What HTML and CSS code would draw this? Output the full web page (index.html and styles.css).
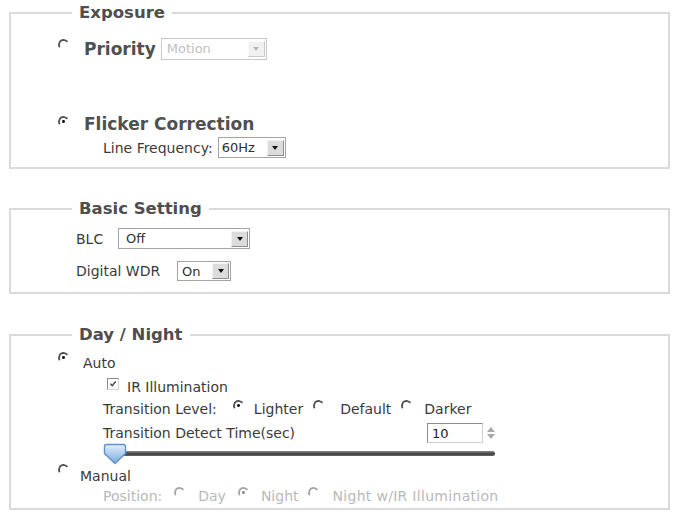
FILE: index.html
```html
<!DOCTYPE html>
<html lang="en">
<head>
<meta charset="utf-8">
<title>Camera Settings</title>
<link rel="stylesheet" href="styles.css">
</head>
<body>
<div class="page">

  <fieldset class="group group-exposure">
    <legend class="group-title">Exposure</legend>

    <div class="row row-priority">
      <span class="radio radio-big"></span>
      <span class="opt-title">Priority</span>
      <div class="select select-disabled select-motion">
        <span class="select-value">Motion</span>
        <span class="select-btn"><i class="tri"></i></span>
      </div>
    </div>

    <div class="row row-flicker">
      <span class="radio radio-big checked"></span>
      <span class="opt-title">Flicker Correction</span>
    </div>

    <div class="row row-linefreq indent">
      <span class="label">Line Frequency:</span>
      <div class="select select-hz">
        <span class="select-value">60Hz</span>
        <span class="select-btn"><i class="tri"></i></span>
      </div>
    </div>
  </fieldset>

  <fieldset class="group group-basic">
    <legend class="group-title">Basic Setting</legend>

    <div class="row row-blc">
      <span class="label label-blc">BLC</span>
      <div class="select select-blc">
        <span class="select-value">Off</span>
        <span class="select-btn"><i class="tri"></i></span>
      </div>
    </div>

    <div class="row row-wdr">
      <span class="label label-wdr">Digital WDR</span>
      <div class="select select-wdr">
        <span class="select-value">On</span>
        <span class="select-btn"><i class="tri"></i></span>
      </div>
    </div>
  </fieldset>

  <fieldset class="group group-daynight">
    <legend class="group-title">Day / Night</legend>

    <div class="row row-auto">
      <span class="radio checked"></span>
      <span class="label opt-auto">Auto</span>
    </div>

    <div class="row row-ir">
      <span class="checkbox">
        <svg viewBox="0 0 12 12" width="12" height="12"><path d="M3 5.5 L5 8.2 L9.2 3" fill="none" stroke="#333" stroke-width="1.5"/></svg>
      </span>
      <span class="label">IR Illumination</span>
    </div>

    <div class="row row-level indent">
      <span class="label">Transition Level:</span>
      <span class="radio checked gap-l16"></span>
      <span class="label gap-l10">Lighter</span>
      <span class="radio gap-l10"></span>
      <span class="label gap-l16">Default</span>
      <span class="radio gap-l10"></span>
      <span class="label gap-l12">Darker</span>
    </div>

    <div class="row row-time indent">
      <span class="label label-time">Transition Detect Time(sec)</span>
      <div class="spin">
        <span class="spin-value">10</span>
      </div>
      <span class="spin-arrows">
        <i class="spin-up"></i>
        <i class="spin-down"></i>
      </span>
    </div>

    <div class="row row-slider indent">
      <div class="slider">
        <div class="slider-track"></div>
        <svg class="slider-thumb" viewBox="0 0 26 24" width="26" height="24">
          <defs>
            <linearGradient id="thumbFill" x1="0" y1="0" x2="0" y2="1">
              <stop offset="0" stop-color="#e4f0fb"/>
              <stop offset="0.55" stop-color="#a9c9ec"/>
              <stop offset="1" stop-color="#7ea9da"/>
            </linearGradient>
          </defs>
          <path d="M4.5 2.5 H21.5 Q23.5 2.5 23.5 4.5 V11.5 L13 21.5 L2.5 11.5 V4.5 Q2.5 2.5 4.5 2.5 Z" fill="url(#thumbFill)" stroke="#5f8fc9" stroke-width="1.4" stroke-linejoin="round"/>
        </svg>
      </div>
    </div>

    <div class="row row-manual">
      <span class="radio"></span>
      <span class="label opt-manual">Manual</span>
    </div>

    <div class="row row-position indent is-disabled">
      <span class="label">Position:</span>
      <span class="radio gap-l12"></span>
      <span class="label gap-l13">Day</span>
      <span class="radio checked gap-l12"></span>
      <span class="label gap-l12">Night</span>
      <span class="radio gap-l9"></span>
      <span class="label gap-l14 wide">Night w/IR Illumination</span>
    </div>
  </fieldset>

</div>
</body>
</html>
```

FILE: styles.css
```css
html, body {
  margin: 0;
  padding: 0;
  background: #ffffff;
}

body {
  font-family: "DejaVu Sans", Verdana, sans-serif;
  font-size: 14px;
  color: #3a3a3a;
}

.page {
  padding: 4px 3px 0 9px;
}

/* ---------- group boxes ---------- */
.group {
  margin: 0;
  padding: 0;
  border: 2px solid #dadada;
  min-width: 0;
}

.group-title {
  margin-left: 61px;
  padding: 0 7px;
  font-size: 16.5px;
  font-weight: bold;
  line-height: 18px;
  color: #4e4e4e;
}

.group-exposure { padding-bottom: 9px; }
.group-basic { margin-top: 31px; padding-bottom: 11px; }
.group-daynight { margin-top: 32px; padding-bottom: 3px; }

/* ---------- rows ---------- */
.row {
  display: flex;
  align-items: center;
  white-space: nowrap;
}

.indent { padding-left: 92px; }

.label { line-height: 18px; }

.opt-title {
  font-size: 17px;
  font-weight: bold;
  color: #505050;
  line-height: 22px;
}

.row-priority { margin-top: 15px; height: 23px; padding-left: 47px; }
.row-priority .opt-title { margin-left: 15px; margin-right: 5px; }

.row-flicker { margin-top: 53px; height: 22px; padding-left: 47px; }
.row-flicker .opt-title { margin-left: 15px; }

.row-linefreq { margin-top: 2px; height: 21px; }
.row-linefreq .label { margin-right: 5px; }

.row-blc { margin-top: 10px; height: 21px; padding-left: 65px; }
.row-wdr { margin-top: 12px; height: 20px; padding-left: 65px; }
.label-blc { width: 42px; }
.label-wdr { width: 101px; }

.row-auto { margin-top: 10px; height: 18px; padding-left: 47px; }
.opt-auto { margin-left: 14px; }

.row-ir { margin-top: 6px; height: 18px; padding-left: 96px; }
.row-ir .label { margin-left: 8px; }

.row-level { margin-top: 4px; height: 18px; }

.row-time { margin-top: 4px; height: 22px; }
.label-time { width: 324px; }

.row-slider { height: 22px; }

.row-manual { margin-top: 1px; height: 18px; padding-left: 47px; }
.opt-manual { margin-left: 11px; }

.row-position { margin-top: 2px; height: 18px; }

.gap-l9 { margin-left: 9px; }
.gap-l10 { margin-left: 10px; }
.gap-l12 { margin-left: 12px; }
.gap-l13 { margin-left: 13px; }
.gap-l14 { margin-left: 14px; }
.gap-l16 { margin-left: 16px; }

.is-disabled { color: #b9b9b9; }
.is-disabled .wide { letter-spacing: 0.3px; }

/* ---------- classic radio: dark arc on the upper-left ---------- */
.radio {
  position: relative;
  flex: none;
  width: 7px;
  height: 7px;
  border-radius: 50%;
  border: 2px solid;
  border-color: #555 transparent transparent #555;
  transform: rotate(10deg);
  align-self: flex-start;
  margin-top: 0;
}
.radio-big { margin-top: 2px; }
.row-flicker .radio { margin-top: 3px; }
.row-auto .radio { margin-top: -2px; }
.row-manual .radio { margin-top: -3px; }
.row-level .radio,
.row-position .radio { margin-top: 0; }

.radio.checked::after {
  content: "";
  position: absolute;
  left: 2px;
  top: 2px;
  width: 3px;
  height: 3px;
  border-radius: 50%;
  background: #111;
}

.is-disabled .radio {
  border-color: #a6a6a6 transparent transparent #a6a6a6;
}
.is-disabled .radio.checked::after { background: #8a8a8a; }

/* ---------- checkbox ---------- */
.checkbox {
  flex: none;
  width: 10px;
  height: 10px;
  border: 1px solid;
  border-color: #8a8a8a #d6d6d6 #d6d6d6 #8a8a8a;
  display: flex;
  align-items: center;
  justify-content: center;
  align-self: flex-start;
  margin-top: 0;
}
.checkbox svg { width: 10px; height: 10px; }

/* ---------- select boxes ---------- */
.select {
  flex: none;
  display: flex;
  align-items: center;
  justify-content: space-between;
  box-sizing: border-box;
  border: 1px solid #a3a3a3;
  background: #fff;
  padding: 0 1px 0 5px;
  font-size: 13px;
  color: #2e2e2e;
}
.select-motion { width: 106px; height: 22px; }
.select-hz { width: 68px; height: 21px; padding-left: 3px; }
.select-blc { width: 132px; height: 21px; padding-left: 7px; }
.select-wdr { width: 54px; height: 20px; padding-left: 4px; }

.select-btn {
  box-sizing: border-box;
  width: 17px;
  height: 16px;
  background: #dcdcdc;
  border: 1px solid;
  border-color: #f2f2f2 #8e8e8e #8e8e8e #f2f2f2;
  display: flex;
  align-items: center;
  justify-content: center;
}
.tri {
  width: 0;
  height: 0;
  border-left: 3.5px solid transparent;
  border-right: 3.5px solid transparent;
  border-top: 4px solid #111;
}

.select-disabled { border-color: #c9c9c9; color: #c0c0c0; }
.select-disabled .select-btn {
  background: #f1f1f1;
  border-color: #fafafa #c8c8c8 #c8c8c8 #fafafa;
}
.select-disabled .tri { border-top-color: #b5b5b5; }

/* ---------- spin box ---------- */
.spin {
  box-sizing: border-box;
  width: 56px;
  height: 20px;
  border: 1px solid;
  border-color: #8c8c8c #d0d0d0 #d0d0d0 #8c8c8c;
  padding-left: 4px;
  display: flex;
  align-items: center;
  font-size: 13px;
  color: #222;
}
.spin-arrows {
  margin-left: 4px;
  display: flex;
  flex-direction: column;
  gap: 2px;
}
.spin-up, .spin-down {
  width: 0;
  height: 0;
  border-left: 4px solid transparent;
  border-right: 4px solid transparent;
}
.spin-up { border-bottom: 5px solid #a9a9a9; }
.spin-down { border-top: 5px solid #a9a9a9; }

/* ---------- slider ---------- */
.slider {
  position: relative;
  width: 392px;
  height: 22px;
}
.slider-track {
  position: absolute;
  left: 2px;
  right: 0;
  top: 7px;
  height: 5px;
  border-radius: 3px;
  background: linear-gradient(#8a8a8a, #3c3c3c 60%, #6a6a6a);
}
.slider-thumb {
  position: absolute;
  left: -1px;
  top: -2px;
}
```
